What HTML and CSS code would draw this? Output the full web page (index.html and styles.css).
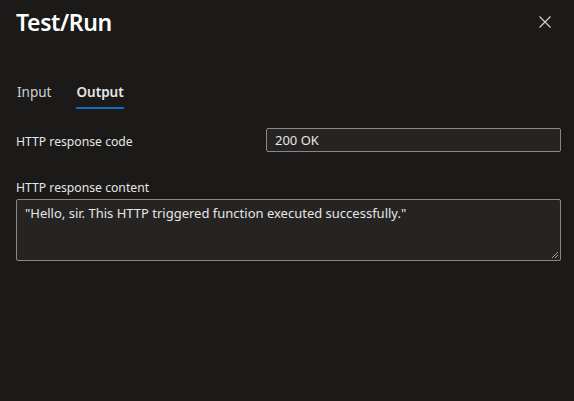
FILE: index.html
```html
<!DOCTYPE html>
<html>
<head>
<meta charset="utf-8">
<link rel="stylesheet" href="styles.css">
</head>
<body>
<div class="panel">
  <div class="header">
    <h1 class="title">Test/Run</h1>
    <button class="close" aria-label="Close">
      <svg width="12" height="12" viewBox="0 0 12 12"><path d="M0.5 0.5 L11.5 11.5 M11.5 0.5 L0.5 11.5" stroke="#d6d6d6" stroke-width="1.1" fill="none"/></svg>
    </button>
  </div>
  <div class="tabs">
    <div class="tab">Input</div>
    <div class="tab active">Output</div>
  </div>
  <div class="row">
    <label class="label">HTTP response code</label>
    <div class="field">200 OK</div>
  </div>
  <div class="block">
    <label class="label">HTTP response content</label>
    <div class="area">"Hello, sir. This HTTP triggered function executed successfully."
      <svg class="grip" width="8" height="8" viewBox="0 0 8 8"><path d="M7 1 L1 7 M7 4 L4 7" stroke="#a0a0a0" stroke-width="1" fill="none"/></svg>
    </div>
  </div>
</div>
</body>
</html>
```
FILE: styles.css
```css
html, body {
  margin: 0;
  padding: 0;
  background: #1b1a19;
  width: 574px;
  height: 401px;
  overflow: hidden;
}
.panel {
  font-family: "Noto Sans", "Open Sans", sans-serif;
  color: #e6e6e6;
  padding: 0 13px 0 16px;
}
.header {
  display: flex;
  justify-content: space-between;
  align-items: flex-start;
  height: 44px;
}
.title {
  margin: 0;
  padding-top: 6px;
  font-size: 23px;
  font-weight: 600;
  color: #ffffff;
  letter-spacing: -0.4px;
}
.close {
  background: none;
  border: none;
  padding: 0;
  margin: 16px 10px 0 0;
  width: 12px;
  height: 12px;
  display: flex;
}
.tabs {
  display: flex;
  gap: 25px;
  margin-top: 39px;
  margin-left: 1px;
}
.tab {
  font-size: 13.5px;
  color: #d2d0ce;
  padding-bottom: 6px;
  border-bottom: 2px solid transparent;
}
.tab.active {
  font-weight: 600;
  color: #e6e6e6;
  border-bottom-color: #0f6cbd;
}
.row {
  display: flex;
  align-items: center;
  margin-top: 19px;
}
.label {
  font-size: 12.2px;
  width: 250px;
  color: #e6e6e6;
  padding-top: 3px;
}
.field {
  flex: 1;
  height: 22px;
  border: 1px solid #8a8886;
  border-radius: 2px;
  background: #252423;
  font-size: 13px;
  line-height: 22px;
  padding-left: 8px;
  color: #e6e6e6;
}
.block {
  margin-top: 24px;
  display: flex;
  flex-direction: column;
  gap: 3px;
}
.area {
  position: relative;
  height: 52px;
  border: 1px solid #8a8886;
  border-radius: 2px;
  background: #252423;
  font-size: 13px;
  padding: 4px 8px;
  color: #e6e6e6;
}
.grip {
  position: absolute;
  right: 1px;
  bottom: 1px;
}
```
